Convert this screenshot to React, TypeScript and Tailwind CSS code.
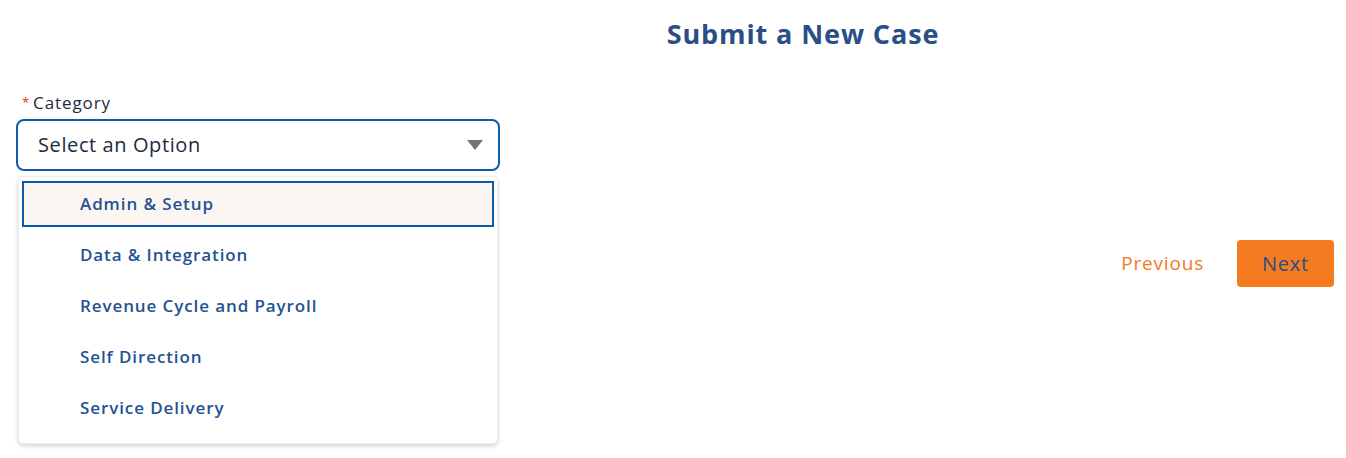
import { useState } from 'react'

const options = [
  'Admin & Setup',
  'Data & Integration',
  'Revenue Cycle and Payroll',
  'Self Direction',
  'Service Delivery',
]

export default function App() {
  const [active] = useState(0)

  return (
    <div
      className="w-[1346px] h-[458px] bg-white overflow-hidden"
      style={{ fontFamily: '"Open Sans", "Liberation Sans", sans-serif' }}
    >
      {/* Title */}
      <div className="flex justify-center pl-[260px] pt-[17px]">
        <h1 className="text-[27px] leading-[34px] font-bold text-[#2a4e86] tracking-[0.9px]">
          Submit a New Case
        </h1>
      </div>

      {/* Form */}
      <div className="pl-4 pr-3 pt-[42px]">
        <div className="relative w-[484px]">
          <label className="flex items-center pl-[6px] text-[17px] leading-[20px] tracking-[0.9px] text-[#1c2b3e]">
            <span className="text-[#e0261b] text-[13px] mr-[3px] -mt-[2px]">*</span>
            Category
          </label>
          <button className="mt-[6px] w-full h-[52px] flex items-center justify-between rounded-[8px] border-2 border-[#0b5cab] pl-[20px] pr-[15px] text-left">
            <span className="text-[20px] tracking-[0.6px] text-[#1c2b3e]">Select an Option</span>
            <svg width="16" height="11" viewBox="0 0 16 11" aria-hidden="true">
              <path d="M0 0h16L8 10z" fill="#747474" />
            </svg>
          </button>

          {/* Dropdown menu */}
          <ul className="absolute left-[2px] top-[83px] z-10 w-[480px] rounded-[5px] bg-white py-[4px] shadow-[0_2px_4px_rgba(0,0,0,0.18)] border border-[#eeeeee]">
            {options.map((o, i) => (
              <li
                key={o}
                className={`mx-[3px] h-[46px] mb-[5px] last:mb-[8px] flex items-center pl-[56px] border-2 text-[17px] tracking-[0.9px] font-semibold text-[#255293] ${
                  i === active ? 'bg-[#fcf6f2] border-[#0b5cab]' : 'border-transparent'
                }`}
              >
                {o}
              </li>
            ))}
          </ul>
        </div>

        {/* Footer buttons */}
        <div className="flex justify-end items-center gap-[33px] mt-[69px]">
          <button className="text-[19px] tracking-[0.8px] text-[#f47b20]">Previous</button>
          <button className="w-[97px] h-[47px] rounded-[4px] bg-[#f47b20] text-[20px] tracking-[0.8px] text-[#2a4e86]">
            Next
          </button>
        </div>
      </div>
    </div>
  )
}
